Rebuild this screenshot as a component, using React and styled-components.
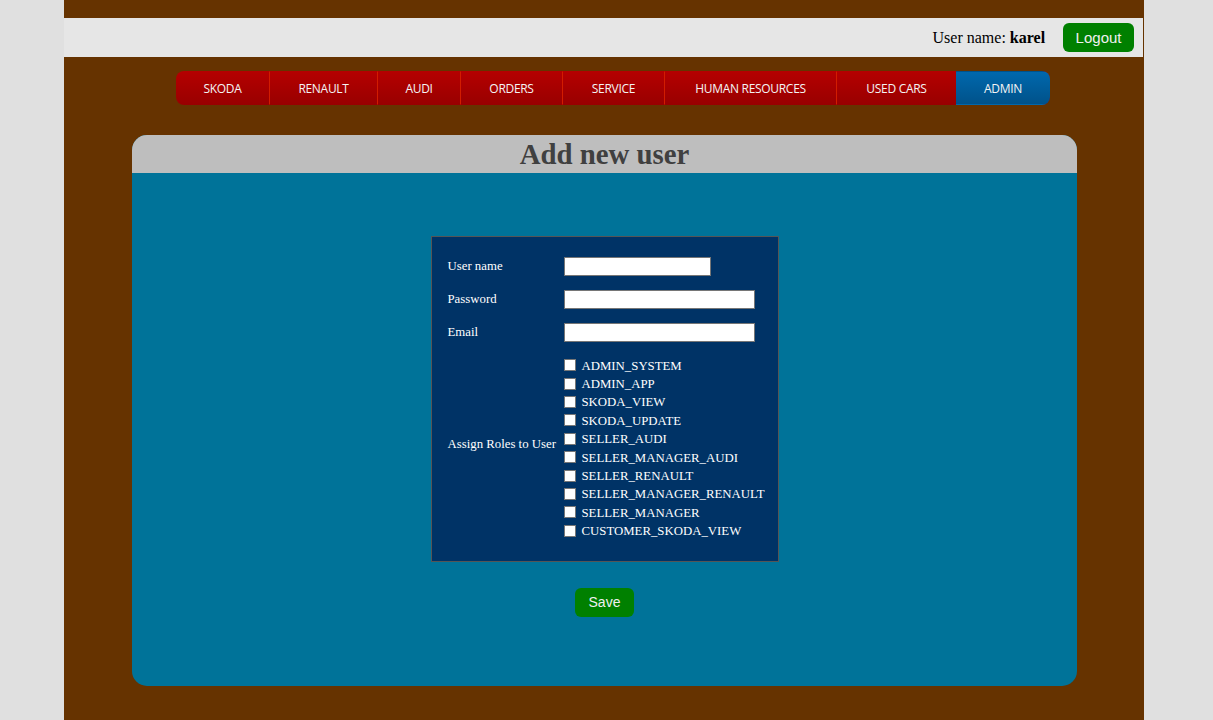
import React from 'react'
import styled, { createGlobalStyle } from 'styled-components'

const GlobalStyle = createGlobalStyle`
    html, body {
        margin: 0;
        padding: 0;
        background-color: #e0e0e0;
        font-family: "Liberation Serif", "Times New Roman", serif;
    }
`;

const Page = styled.div`
    width: 1080px;
    min-height: 720px;
    margin: 0 0 0 64px;
    padding-top: 18px;
    box-sizing: border-box;
    background-color: #663300;
    padding-bottom: 34px;
`;

const TopBar = styled.div`
    height: 39px;
    background-color: #e6e6e6;
    display: flex;
    align-items: center;
    justify-content: flex-end;
    padding-right: 9px;
    margin-right: 1px;
    font-size: 16px;
    color: #000;
`;

const UserLabel = styled.span`
    margin-right: 18px;

    b {
        font-weight: bold;
    }
`;

const GreenButton = styled.button`
    background-color: #008000;
    color: #f0f0f0;
    border: none;
    border-radius: 6px;
    font-family: "Liberation Sans", Arial, sans-serif;
    font-size: ${props => props.$size || 15}px;
    height: 29px;
    padding: 0 ${props => props.$pad || 12.5}px;
    cursor: pointer;
`;

const Nav = styled.ul`
    display: flex;
    list-style: none;
    margin: 14px 0 0 112px;
    padding: 0;
    width: fit-content;
    height: 34px;
    border-radius: 8px;
    overflow: hidden;
    background: linear-gradient(#b50000, #980000);
`;

const NavItem = styled.li`
    display: flex;
    align-items: center;
    justify-content: center;
    width: ${props => props.$w}px;
    box-sizing: border-box;
    font-family: "Open Sans", Lato, sans-serif;
    font-size: 12px;
    letter-spacing: -0.3px;
    color: #f4f4f4;
    border-left: ${props => (props.$first || props.$active) ? 'none' : '1px solid #d21d00'};
    border-top: 1px solid transparent;
    border-bottom: 1px solid transparent;
    background: ${props => props.$active ? 'linear-gradient(#0068ad, #00528a)' : 'transparent'};
`;

const Panel = styled.div`
    width: 945px;
    margin: 30px 0 0 68px;
    border-radius: 15px;
    overflow: hidden;
    background-color: #007399;
`;

const PanelHeader = styled.h1`
    margin: 0;
    height: 38px;
    line-height: 38px;
    text-align: center;
    background-color: #bebebe;
    color: #404040;
    font-size: 28.8px;
    font-weight: bold;
`;

const PanelBody = styled.div`
    display: flex;
    flex-direction: column;
    align-items: center;
    padding: 63px 0 69px;
`;

const FormBox = styled.div`
    width: 348px;
    box-sizing: border-box;
    background-color: #003366;
    border: 1px solid #555;
    padding: 13px 15px 20px 16px;
    display: grid;
    grid-template-columns: 116px auto;
    align-items: center;
    color: #fff;
    font-size: 12.8px;
`;

const Label = styled.div`
    height: ${props => props.$h || 33}px;
    display: flex;
    align-items: center;
`;

const Field = styled.div`
    height: 33px;
    display: flex;
    align-items: center;
`;

const TextInput = styled.input`
    width: ${props => props.$w}px;
    height: 19px;
    box-sizing: border-box;
    border: 1px solid #767676;
    margin: 0;
    padding: 1px 2px;
    background: #fff;
`;

const Roles = styled.div`
    padding-top: 8px;
`;

const RoleRow = styled.label`
    display: flex;
    align-items: center;
    height: 18.4px;
    font-size: 12.8px;
    color: #fff;

    input {
        width: 10px;
        height: 10px;
        margin: 0 6px 0 0;
        appearance: none;
        background: #fff;
        border: 1px solid #777;
        border-radius: 0;
        box-sizing: content-box;
        position: relative;
        top: -1px;
    }
`;

const SaveRow = styled.div`
    margin-top: 26px;
`;

const navItems = [
    ['SKODA', 93], ['RENAULT', 108], ['AUDI', 83], ['ORDERS', 102],
    ['SERVICE', 102], ['HUMAN RESOURCES', 172], ['USED CARS', 120], ['ADMIN', 94],
];

const roles = [
    'ADMIN_SYSTEM', 'ADMIN_APP', 'SKODA_VIEW', 'SKODA_UPDATE', 'SELLER_AUDI',
    'SELLER_MANAGER_AUDI', 'SELLER_RENAULT', 'SELLER_MANAGER_RENAULT',
    'SELLER_MANAGER', 'CUSTOMER_SKODA_VIEW',
];

const App = () => {
    return (
        <>
            <GlobalStyle />
            <Page>
                <TopBar>
                    <UserLabel>User name: <b>karel</b></UserLabel>
                    <GreenButton>Logout</GreenButton>
                </TopBar>

                <Nav>
                    {navItems.map(([name, w], i) => (
                        <NavItem key={name} $w={w} $first={i === 0} $active={name === 'ADMIN'}>
                            {name}
                        </NavItem>
                    ))}
                </Nav>

                <Panel>
                    <PanelHeader>Add new user</PanelHeader>
                    <PanelBody>
                        <FormBox>
                            <Label>User name</Label>
                            <Field><TextInput $w={147} /></Field>
                            <Label>Password</Label>
                            <Field><TextInput type="password" $w={191} /></Field>
                            <Label>Email</Label>
                            <Field><TextInput $w={191} /></Field>
                            <Label $h={191}>Assign Roles to User</Label>
                            <Roles>
                                {roles.map(r => (
                                    <RoleRow key={r}>
                                        <input type="checkbox" />
                                        {r}
                                    </RoleRow>
                                ))}
                            </Roles>
                        </FormBox>
                        <SaveRow>
                            <GreenButton $size={14} $pad={14}>Save</GreenButton>
                        </SaveRow>
                    </PanelBody>
                </Panel>
            </Page>
        </>
    )
}

export default App
